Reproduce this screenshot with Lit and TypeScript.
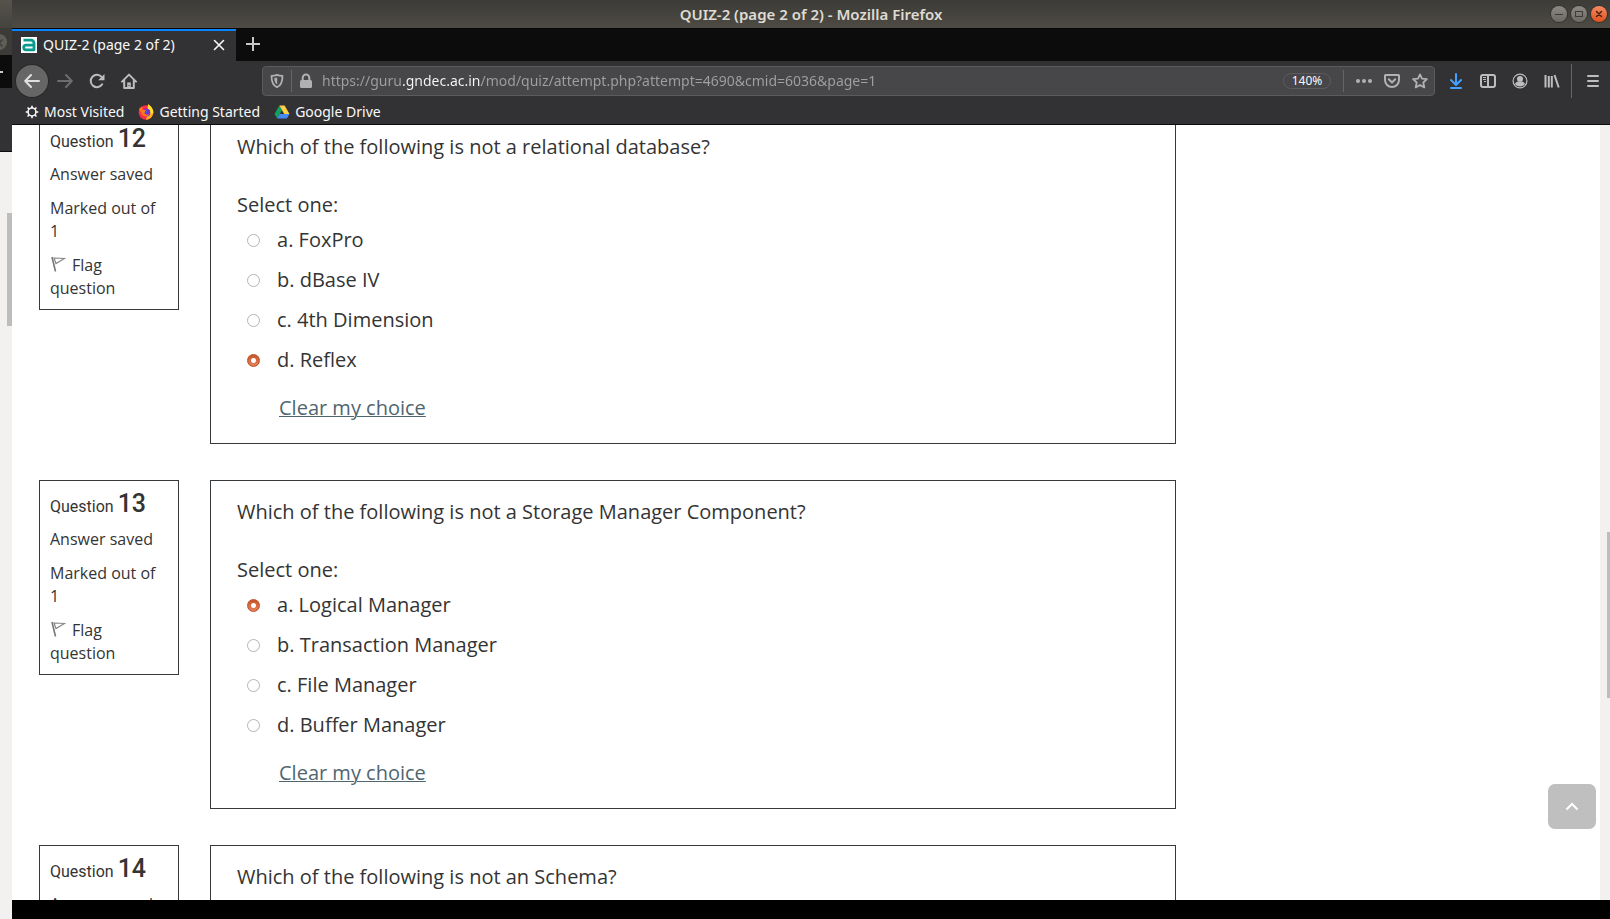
import { LitElement, html, svg, css } from "lit";
import { customElement, property, state } from "lit/decorators.js";

interface Question {
  number: number;
  text: string;
  options: string[];
  selected: number;
}

const QUESTIONS: Question[] = [
  {
    number: 12,
    text: "Which of the following is not a relational database?",
    options: ["FoxPro", "dBase IV", "4th Dimension", "Reflex"],
    selected: 3,
  },
  {
    number: 13,
    text: "Which of the following is not a Storage Manager Component?",
    options: ["Logical Manager", "Transaction Manager", "File Manager", "Buffer Manager"],
    selected: 0,
  },
  {
    number: 14,
    text: "Which of the following is not an Schema?",
    options: [],
    selected: -1,
  },
];

const icon = (body: unknown, size = 16) =>
  html`<svg width=${size} height=${size} viewBox="0 0 16 16" fill="none" aria-hidden="true">${body}</svg>`;

const line = (d: string, width = 2) =>
  svg`<path d=${d} stroke="currentColor" stroke-width=${width} stroke-linecap="round" stroke-linejoin="round"/>`;

const ICONS = {
  back: icon(line("M15 8H1.5M7 2L1.2 8L7 14")),
  forward: icon(line("M1 8H14.5M9 2L14.8 8L9 14")),
  reload: icon(svg`
    <path d="M13.2 11.3A6.2 6.2 0 1 1 12.6 3.9" stroke="currentColor" stroke-width="2" stroke-linecap="round"/>
    <path d="M15.5 1V7.2H9.2Z" fill="currentColor"/>`),
  home: icon(svg`
    <path d="M1 8.6L8 1.6L15 8.6M3.2 7.5V15H12.8V7.5" stroke="currentColor" stroke-width="2" stroke-linecap="round" stroke-linejoin="round"/>
    <path d="M6.2 15V9.4H9.8V15" fill="currentColor"/>
    <rect x="7.5" y="12" width="1" height="1" fill="#323234"/>`),
  shield: icon(svg`
    <path d="M8 1.9C6.300 2.700 4.300 2.900 2.500 2.900C2.500 8.500 3.300 12.100 8 14.200C12.700 12.100 13.500 8.500 13.500 2.900C11.700 2.900 9.700 2.700 8 1.900Z" stroke="currentColor" stroke-width="1.800" stroke-linejoin="round"/>
    <path d="M8.200 4.500V11.600C6 10.300 5.400 8.300 5.300 5Z" fill="currentColor"/>`),
  lock: icon(svg`
    <rect x="2" y="7" width="12" height="8" rx="1.500" fill="currentColor"/>
    <path d="M4.700 7.500V4.800A3.300 3.300 0 0 1 11.300 4.800V7.500" stroke="currentColor" stroke-width="2"/>`),
  dots: icon(svg`
    <circle cx="2" cy="8" r="2" fill="currentColor"/><circle cx="8" cy="8" r="2" fill="currentColor"/>
    <circle cx="14" cy="8" r="2" fill="currentColor"/>`),
  pocket: icon(svg`
    <path d="M1.500 2H14.500A.5 .5 0 0 1 15 2.500V7A7 7 0 0 1 1 7V2.500A.5 .5 0 0 1 1.500 2Z" stroke="currentColor" stroke-width="2"/>
    <path d="M4.800 6.300L8 9.500L11.200 6.300" stroke="currentColor" stroke-width="2" stroke-linecap="round" stroke-linejoin="round"/>`),
  star: icon(line("M8 1.400L10 5.700L14.900 6.200L11.300 9.500L12.300 14.400L8 12L3.700 14.400L4.700 9.500L1.100 6.200L6 5.700Z", 1.8)),
  download: icon(svg`
    <path d="M8 1V11.500M3 7L8 12L13 7" stroke="currentColor" stroke-width="2" stroke-linecap="round" stroke-linejoin="round"/>
    <rect x="2" y="14" width="12" height="2" rx="1" fill="currentColor"/>`),
  sidebar: icon(svg`
    <rect x="1" y="2" width="14" height="12" rx="2" stroke="currentColor" stroke-width="2"/>
    <path d="M8 2V14" stroke="currentColor" stroke-width="2"/>
    <path d="M3 4.500H6M3 6.500H6M4 8.500H6" stroke="currentColor" stroke-width="1"/>`),
  account: icon(svg`
    <circle cx="8" cy="8" r="6.900" stroke="currentColor" stroke-width="1.200"/>
    <circle cx="8" cy="6" r="3" fill="currentColor"/>
    <path d="M3 11C3.600 9.500 5 8.500 6 8.500C7 9.300 9 9.300 10 8.500C11 8.500 12.400 9.500 13 11C12 12.600 10.200 13.500 8 13.500C5.800 13.500 4 12.600 3 11Z" fill="currentColor"/>`),
  library: icon(svg`
    <path d="M1.500 2V14.500M4.800 3V14.500M7.800 3V14.500" stroke="currentColor" stroke-width="2"/>
    <path d="M10.500 2L14.700 14.500" stroke="currentColor" stroke-width="2"/>`),
  menu: icon(line("M3 3H13M3 8H13M3 13H13")),
  gear: icon(svg`
    <circle cx="8" cy="8" r="4.500" stroke="currentColor" stroke-width="1.800"/>
    <path d="M8 .8V3.500M8 12.500V15.200M.8 8H3.500M12.500 8H15.200M2.900 2.900L4.800 4.800M11.200 11.200L13.100 13.100M13.100 2.900L11.200 4.800M4.800 11.200L2.900 13.100" stroke="currentColor" stroke-width="1.800"/>`, 14),
  firefox: icon(svg`
    <circle cx="8" cy="8.500" r="7.300" fill="#ff2a4d"/>
    <path d="M10 .2C14.500 3 16.500 7.500 14.500 11.500C13 14.500 10 15.800 8 15.800L10 9Z" fill="#ffb31a"/>
    <path d="M10 .2C13 2 15.400 5 15.300 9C13.500 11 11 9 9.500 5.500Z" fill="#ffe226"/>
    <circle cx="8.300" cy="8.500" r="4" fill="#7a2fd0"/>
    <path d="M1 5L4 2.500L4.500 5.500L8.500 6.500L6.500 8.500C6.500 10.500 9 11.300 11 10.300C9.500 13.500 4.500 13 3.500 9.500Z" fill="#ff7a12"/>
    <circle cx="8.600" cy="8" r="1.600" fill="#3b56e8"/>`),
  drive: icon(svg`
    <path d="M5.400 1.500L8 6.200L3.200 14.500L.5 9.900Z" fill="#11a05e"/>
    <path d="M5.400 1.500H10.600L15.500 9.900H10.200Z" fill="#ffcf48"/>
    <path d="M5.700 9.900H15.500L12.900 14.500H3.100Z" fill="#4688f4"/>`),
  favicon: icon(svg`
    <rect width="16" height="16" fill="#fff"/>
    <path d="M2.500 3.200H10A3 3 0 0 1 13 6.200V12.800H5A2.300 2.300 0 0 1 5 8.200H12" stroke="#0a9a8e" stroke-width="2.800" stroke-linejoin="round"/>`),
  close: icon(line("M3.500 3.500L12.500 12.500M12.500 3.500L3.500 12.500", 1.6)),
  plus: icon(svg`<path d="M8 1V15M1 8H15" stroke="currentColor" stroke-width="2"/>`),
  flag: icon(svg`
    <path d="M2 1L5.500 15.500" stroke="#777" stroke-width="1.600"/>
    <path d="M4 2L14.500 2.500L6 7.500Z" stroke="#888" stroke-width="1.200"/>`),
  up: icon(svg`<path d="M2.500 10.500L8 5L13.500 10.500" stroke="currentColor" stroke-width="2"/>`),
};

@customElement("title-bar")
class TitleBar extends LitElement {
  static styles = css`
    :host { display: grid; grid-template-columns: 1fr auto 1fr; align-items: center; height: 28px;
      padding: 0 3px; background: linear-gradient(#3c3b37, #4e4b44); }
    .title { grid-column: 2; margin: 0; font-size: 15px; line-height: 20px; font-weight: 600; color: #dfdbd2; }
    .controls { display: flex; gap: 4px; justify-content: flex-end; }
    .control { width: 16px; height: 16px; padding: 0; border: 0; border-radius: 50%; display: grid; place-items: center;
      background: linear-gradient(#8b8982, #6b6963); color: #3c3b37; box-shadow: 0 0 0 1px #34332f; font: inherit; }
    .control.close { background: linear-gradient(#f58a64, #e2511b); color: #46240f; }
  `;
  render() {
    return html`
      <h1 class="title">QUIZ-2 (page 2 of 2) - Mozilla Firefox</h1>
      <div class="controls">
        <button class="control" aria-label="Minimize">${icon(svg`<path d="M4 8.500H12" stroke="currentColor"/>`)}</button>
        <button class="control" aria-label="Maximize">${icon(svg`<rect x="4.500" y="5.500" width="7" height="5" stroke="currentColor"/>`)}</button>
        <button class="control close" aria-label="Close">${icon(line("M5.500 5.500L10.500 10.500M10.500 5.500L5.500 10.500", 1.5))}</button>
      </div>`;
  }
}

@customElement("browser-toolbar")
class BrowserToolbar extends LitElement {
  static styles = css`
    :host { display: block; color: #f9f9fa; font-size: 14px; line-height: 20px; }
    svg { display: block; }
    button { font: inherit; color: inherit; background: none; border: 0; padding: 0; }
    .tabs { display: flex; height: 33px; box-sizing: border-box; background: #0c0c0d; border-top: 1px solid #060606; }
    .tab { display: flex; align-items: center; box-sizing: border-box; width: 224px; padding: 0 9px 2px; gap: 6px;
      background: #323234; border-top: 2px solid #0a84ff; }
    .tab-title { flex: 1; }
    .new-tab { width: 34px; padding-bottom: 2px; display: grid; place-items: center; color: #c8c8c9; }
    .nav { display: flex; align-items: center; height: 39px; padding: 0 1px 0 4px; background: #323234; color: #bdbdbf; }
    .tool { width: 32px; height: 32px; flex: none; display: grid; place-items: center; }
    .tool.back { margin-right: 1px; border-radius: 50%; background: #666667; box-shadow: 0 0 0 1px #29292a; color: #e0e0e1; }
    .tool.off { color: #6d6d6f; }
    .tool.active { color: #45a1ff; }
    .url { flex: 1; min-width: 0; display: flex; align-items: center; height: 30px; box-sizing: border-box;
      margin: 0 5px 0 117px; padding: 0 0 0 6px; border: 1px solid #5b5b5d; border-radius: 4px; background: #474749; color: #b1b1b3; }
    .slot { width: 28px; height: 28px; flex: none; display: grid; place-items: center; }
    .slot.narrow { width: 16px; }
    .rule { width: 1px; height: 22px; flex: none; background: #656567; margin: 0 6px; }
    .rule.tall { height: 34px; margin: 0 5px 0 3px; }
    .address { flex: 1; min-width: 0; border: 0; outline: 0; padding: 0; margin-left: 8px; height: 28px; font: inherit; color: #a0a0a2;
      background: linear-gradient(90deg, #a0a0a2 81px, #f9f9fa 81px, #f9f9fa 159px, #a0a0a2 159px);
      -webkit-background-clip: text; background-clip: text; -webkit-text-fill-color: transparent; }
    .zoom { width: 48px; height: 16px; box-sizing: border-box; border: 1px solid #5b5b5d; border-radius: 8px;
      color: #f9f9fa; font-size: 12px; line-height: 14px; margin-right: 6px; }
    .bookmarks { display: flex; gap: 14px; height: 25px; box-sizing: border-box; padding: 0 13px; background: #323234;
      border-bottom: 1px solid #0c0c0d; }
    .bookmark { display: flex; align-items: center; gap: 5px; height: 24px; color: inherit; text-decoration: none; }
  `;
  render() {
    const tool = (name: keyof typeof ICONS, label: string, kind = "") =>
      html`<button class="tool ${kind}" aria-label=${label}>${ICONS[name]}</button>`;
    return html`
      <div class="tabs">
        <div class="tab">
          ${ICONS.favicon}<span class="tab-title">QUIZ-2 (page 2 of 2)</span>
          <button aria-label="Close tab">${ICONS.close}</button>
        </div>
        <button class="new-tab" aria-label="New tab">${ICONS.plus}</button>
      </div>
      <nav class="nav">
        ${tool("back", "Back", "back")} ${tool("forward", "Forward", "off")}
        ${tool("reload", "Reload")} ${tool("home", "Home")}
        <div class="url">
          <span class="slot narrow">${ICONS.shield}</span>
          <span class="rule"></span>
          <span class="slot narrow">${ICONS.lock}</span>
          <input class="address" aria-label="Address" value="https://guru.gndec.ac.in/mod/quiz/attempt.php?attempt=4690&cmid=6036&page=1" />
          <button class="zoom" aria-label="Reset zoom">140%</button>
          <span class="rule"></span>
          <button class="slot" aria-label="Page actions">${ICONS.dots}</button>
          <button class="slot" aria-label="Save to Pocket">${ICONS.pocket}</button>
          <button class="slot" aria-label="Bookmark this page">${ICONS.star}</button>
        </div>
        ${tool("download", "Downloads", "active")} ${tool("sidebar", "Sidebars")}
        ${tool("account", "Account")} ${tool("library", "Library")}
        <span class="rule tall"></span>
        ${tool("menu", "Menu")}
      </nav>
      <div class="bookmarks">
        <a class="bookmark" href="#">${ICONS.gear}Most Visited</a>
        <a class="bookmark" href="#">${ICONS.firefox}Getting Started</a>
        <a class="bookmark" href="#">${ICONS.drive}Google Drive</a>
      </div>`;
  }
}

@customElement("quiz-question")
class QuizQuestion extends LitElement {
  @property({ attribute: false }) question!: Question;
  @state() private choice: number | null = null;

  static styles = css`
    :host { display: grid; grid-template-columns: 140px minmax(0, 1fr); column-gap: 31px; align-items: start;
      color: #343434; font-family: "Open Sans", "Noto Sans", sans-serif; }
    .info, .content { box-sizing: border-box; border: 1px solid #373a3c; }
    .info { padding: 8px 10px 9px; font-size: 16px; line-height: 23px; }
    .info p { margin: 0 0 11px; }
    .info p:last-child { margin: 0; }
    .heading { margin: 0 0 6px; font-family: Roboto, sans-serif; font-size: 16px; line-height: 30px; font-weight: 400; }
    .number { font-size: 25px; font-weight: 500; }
    .flag { color: inherit; text-decoration: none; }
    .flag svg { margin-right: 6px; vertical-align: -1px; }
    .content { padding: 16px 26px 20px; font-size: 20px; line-height: 30px; }
    .text { margin: 0 0 28px; }
    .options { border: 0; margin: 0; padding: 0; }
    .legend { padding: 0; display: block; }
    .option { display: flex; align-items: center; height: 40px; }
    .radio { appearance: none; width: 13px; height: 13px; box-sizing: border-box; margin: 0 17px 0 10px; border: 1px solid #b4b4b4;
      border-radius: 50%; background: #fff; }
    .radio:checked { border-color: #b9502a; background: radial-gradient(circle, #fff 0 2px, transparent 3px), linear-gradient(#c9552a, #e2825c); }
    .clear { display: inline-block; margin: 13px 0 0 42px; color: #4f666f; text-decoration-thickness: 1px; }
  `;

  willUpdate(changed: Map<string, unknown>) {
    if (changed.has("question")) this.choice = this.question.selected;
  }

  renderAnswers(q: Question) {
    return html`
      <fieldset class="options">
        <legend class="legend">Select one:</legend>
        ${q.options.map(
          (option, i) => html`<div class="option">
            <input class="radio" type="radio" name="answer" id="answer-${i}" .checked=${this.choice === i}
              @change=${() => (this.choice = i)} />
            <label for="answer-${i}">${"abcd"[i]}. ${option}</label>
          </div>`
        )}
      </fieldset>
      <a class="clear" href="#" @click=${(e: Event) => { e.preventDefault(); this.choice = null; }}>Clear my choice</a>`;
  }

  render() {
    const q = this.question;
    const loaded = q.options.length > 0;
    return html`
      <div class="info">
        <h2 class="heading">Question <span class="number">${q.number}</span></h2>
        <p>Answer saved</p>
        ${loaded
          ? html`<p>Marked out of 1</p>
              <p><a class="flag" href="#">${ICONS.flag}Flag question</a></p>`
          : ""}
      </div>
      <div class="content">
        <p class="text">${q.text}</p>
        ${loaded ? this.renderAnswers(q) : ""}
      </div>`;
  }
}

@customElement("app-root")
class AppRoot extends LitElement {
  static styles = css`
    :host { display: grid; grid-template-columns: 12px minmax(0, 1fr); height: 100vh; overflow: hidden;
      font-family: "Noto Sans", sans-serif; background: #fff; }
    .behind { display: flex; flex-direction: column; background: #f2f1f0; overflow: hidden; }
    .behind-title { height: 28px; background: linear-gradient(#56534c, #45433e); }
    .behind-controls { height: 27px; background: #3c3b37; display: flex; align-items: center; justify-content: flex-end; }
    .behind-close { width: 16px; height: 16px; margin-right: 5px; flex: none; border-radius: 50%; background: #5f5d57; color: #3c3b37; }
    .behind-tabs { height: 33px; background: #0c0c0d; display: flex; align-items: center; }
    .behind-plus { width: 3px; height: 2px; background: #c8c8c9; }
    .behind-nav { height: 63px; background: #323234; border-bottom: 1px solid #0c0c0d; }
    .behind-thumb { width: 5px; height: 113px; margin: 61px 0 0 7px; background: #bdbdbd; }
    .window { display: flex; flex-direction: column; min-width: 0; min-height: 0; }
    .viewport { position: relative; flex: 1; min-height: 0; display: grid; grid-template-columns: minmax(0, 1fr) 10px; overflow: hidden; }
    .page { display: grid; grid-template-columns: 11fr 4fr; min-height: 0; overflow: hidden; }
    .questions { display: flex; flex-direction: column; gap: 36px; padding: 0 1px 0 27px; margin-top: -10px; }
    .track { background: #f2f1f0; display: flex; flex-direction: column; align-items: flex-end; }
    .thumb { width: 3px; height: 166px; margin-top: 407px; background: #bdbdbd; }
    .top { position: absolute; right: 14px; bottom: 71px; width: 48px; height: 45px; padding: 0; border: 0; border-radius: 7px;
      display: grid; place-items: center; background: #bfbfbf; color: #fff; }
    .desktop { height: 19px; flex: none; background: #000; }
  `;
  render() {
    return html`
      <div class="behind">
        <div class="behind-title"></div>
        <div class="behind-controls"><span class="behind-close">${icon(line("M5 5L11 11M11 5L5 11", 1.5))}</span></div>
        <div class="behind-tabs"><span class="behind-plus"></span></div>
        <div class="behind-nav"></div>
        <div class="behind-thumb"></div>
      </div>
      <div class="window">
        <title-bar></title-bar>
        <browser-toolbar></browser-toolbar>
        <div class="viewport">
          <main class="page">
            <div class="questions">
              ${QUESTIONS.map((q) => html`<quiz-question .question=${q}></quiz-question>`)}
            </div>
          </main>
          <div class="track"><div class="thumb"></div></div>
          <button class="top" aria-label="Back to top">${ICONS.up}</button>
        </div>
        <div class="desktop"></div>
      </div>`;
  }
}
